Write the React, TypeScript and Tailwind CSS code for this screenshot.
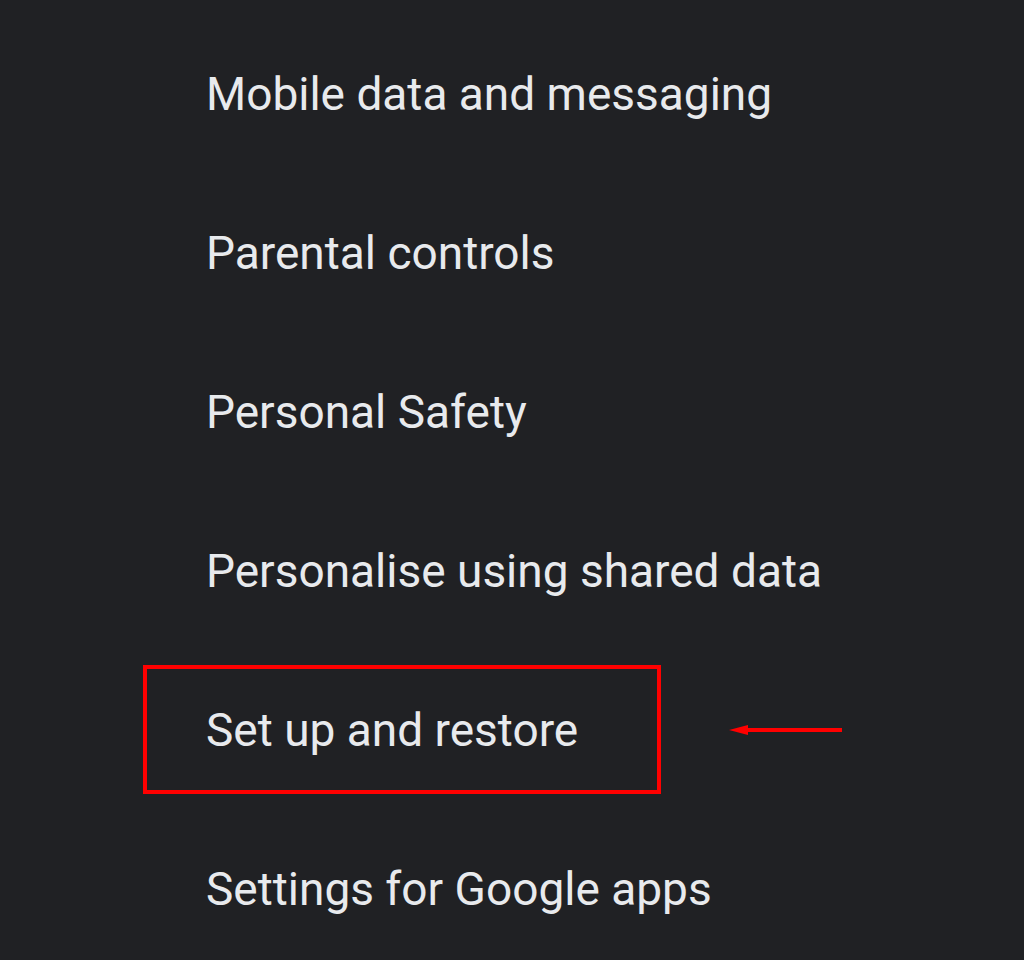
const items = [
  "Mobile data and messaging",
  "Parental controls",
  "Personal Safety",
  "Personalise using shared data",
  "Set up and restore",
  "Settings for Google apps",
];

const HIGHLIGHT = "Set up and restore";

export default function App() {
  return (
    <div
      className="w-[1024px] h-[960px] overflow-hidden bg-[#202124] pt-[14px]"
      style={{ fontFamily: "Roboto, 'Open Sans', sans-serif" }}
    >
      {items.map((label) =>
        label === HIGHLIGHT ? (
          <div key={label} className="h-[159px] flex items-center">
            <div className="ml-[143px] w-[518px] h-[129px] border-4 border-[#ff0000] flex items-center pl-[59px]">
              <span className="text-[46px] text-[#e8eaed] leading-none">{label}</span>
            </div>
            {/* arrow */}
            <svg width="114" height="12" viewBox="0 0 114 12" className="ml-[68px]">
              <line x1="14" y1="6" x2="113" y2="6" stroke="#ff0000" strokeWidth="4" />
              <polygon points="0,6 19,1 19,11" fill="#ff0000" />
            </svg>
          </div>
        ) : (
          <div key={label} className="h-[159px] flex items-center pl-[206px]">
            <span className="text-[46px] text-[#e8eaed] leading-none">{label}</span>
          </div>
        ),
      )}
    </div>
  );
}
